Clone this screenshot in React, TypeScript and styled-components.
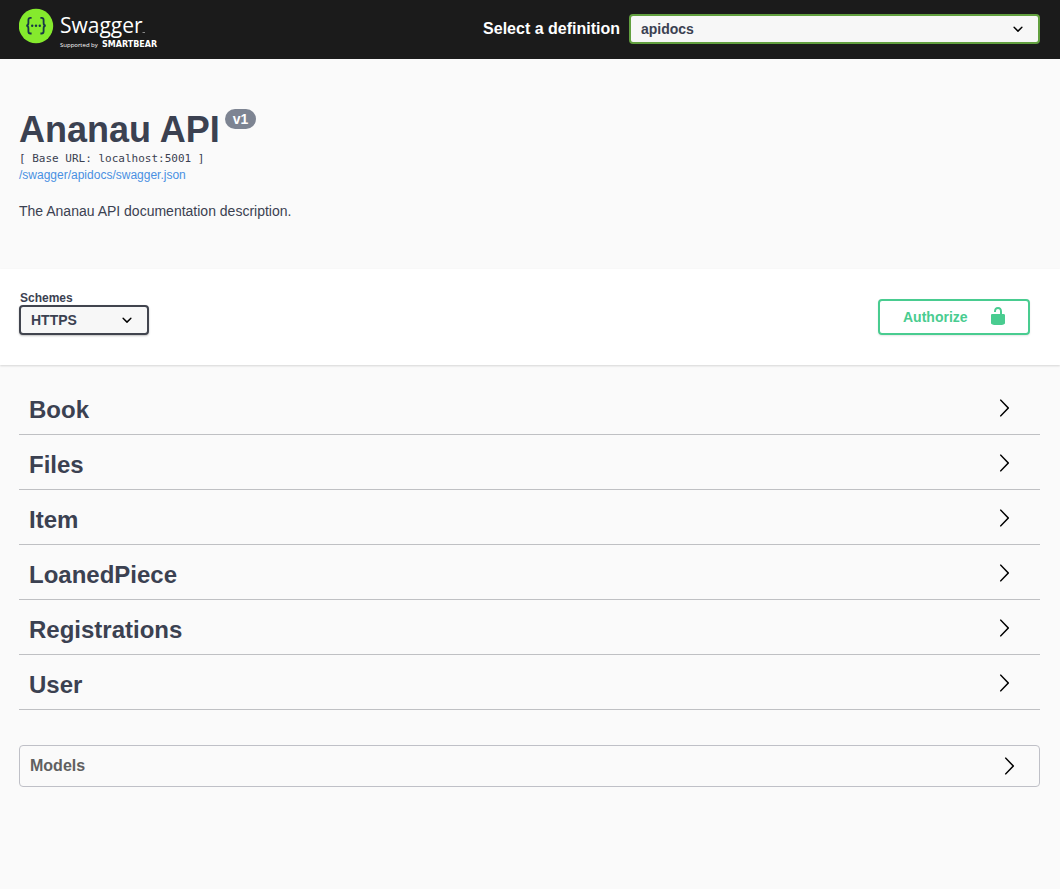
import React from "react";
import styled, { createGlobalStyle } from "styled-components";

const GlobalStyle = createGlobalStyle`
  *, *::before, *::after { box-sizing: border-box; }
  body {
    margin: 0;
    background: #fafafa;
    color: #3b4151;
    font-family: "Liberation Sans", Arial, sans-serif;
  }
`;

const TopBar = styled.header`
  display: grid;
  grid-template-columns: 5fr 6fr;
  align-items: center;
  height: 59px;
  padding: 0 20px 1px 19px;
  background: #1b1b1b;
`;

const LogoLink = styled.a`
  display: flex;
  width: max-content;
`;

const DefinitionForm = styled.form`
  display: flex;
  align-items: center;
  gap: 9px;
`;

const DefinitionLabel = styled.label`
  color: #ffffff;
  font-size: 16px;
  font-weight: 700;
  line-height: 18px;
  white-space: nowrap;
`;

const SelectBox = styled.div<{ $grow?: boolean }>`
  display: grid;
  align-items: center;
  flex: ${(p) => (p.$grow ? "1" : "none")};
  width: ${(p) => (p.$grow ? "auto" : "130px")};

  > * {
    grid-area: 1 / 1;
  }

  > svg {
    justify-self: end;
    margin-right: 12px;
    pointer-events: none;
  }
`;

const Select = styled.select<{ $accent: string; $raised?: boolean }>`
  appearance: none;
  width: 100%;
  height: 30px;
  padding: 0 40px 0 10px;
  border: 2px solid ${(p) => p.$accent};
  border-radius: 4px;
  background: #f7f7f7;
  box-shadow: ${(p) => (p.$raised ? "0 1px 2px rgba(0, 0, 0, 0.25)" : "none")};
  color: #3b4151;
  font: 700 14px "Liberation Sans", Arial, sans-serif;
`;

const Info = styled.section`
  padding: 50px 20px 48px 19px;
`;

const Title = styled.h1`
  display: flex;
  align-items: flex-start;
  gap: 5px;
  margin: 0;
  font-size: 36px;
  line-height: 41px;
`;

const Version = styled.small`
  padding: 0 8px;
  border-radius: 10px;
  background: #7d8492;
  color: #ffffff;
  font-size: 14px;
  line-height: 20px;
`;

const BaseUrl = styled.pre`
  margin: 0;
  padding-top: 1px;
  font: 11px/16px "DejaVu Sans Mono", monospace;
`;

const SpecLink = styled.a`
  display: block;
  width: max-content;
  color: #4990e2;
  font-size: 12px;
  line-height: 16px;
  text-decoration: none;
`;

const Description = styled.p`
  margin: 18px 0 0;
  font-size: 14px;
  line-height: 20px;
`;

const SchemeBar = styled.section`
  display: flex;
  align-items: flex-end;
  justify-content: space-between;
  padding: 22px 30px 30px 19px;
  background: #ffffff;
  box-shadow: 0 1px 2px rgba(0, 0, 0, 0.15);
`;

const SchemeLabel = styled.label`
  display: block;
  padding-left: 1px;
  font-size: 12px;
  font-weight: 700;
  line-height: 14px;
`;

const AuthorizeButton = styled.button`
  display: flex;
  align-items: center;
  justify-content: space-between;
  width: 152px;
  height: 36px;
  padding: 0 20px 0 23px;
  border: 2px solid #49cc90;
  border-radius: 4px;
  background: transparent;
  box-shadow: 0 1px 2px rgba(0, 0, 0, 0.1);
  color: #49cc90;
  font: 700 14px "Liberation Sans", Arial, sans-serif;

  > svg {
    margin-bottom: 2px;
  }
`;

const Content = styled.main`
  padding: 15px 20px 40px 19px;
`;

const TagHeading = styled.h2`
  margin: 0;
  border-bottom: 1px solid #bfc0c3;
`;

const TagButton = styled.button`
  display: flex;
  align-items: center;
  justify-content: space-between;
  width: 100%;
  height: 54px;
  padding: 2px 26px 0 10px;
  border: 0;
  background: transparent;
  color: #3b4151;
  font: 700 24px "Liberation Sans", Arial, sans-serif;
`;

const TagName = styled.span`
  padding-top: 4px;
  line-height: 28px;
`;

const Models = styled.section`
  margin-top: 35px;
  border: 1px solid #bfc0c7;
  border-radius: 4px;
`;

const ModelsHeading = styled.h3`
  margin: 0;
`;

const ModelsButton = styled.button`
  display: flex;
  align-items: center;
  justify-content: space-between;
  width: 100%;
  height: 40px;
  padding: 0 20px 0 10px;
  border: 0;
  background: transparent;
  color: #606060;
  font: 700 16px "Liberation Sans", Arial, sans-serif;
`;

const Logo = () => (
  <svg width="142" height="42" viewBox="0 0 142 42" role="img" aria-label="Swagger, supported by SmartBear">
    <circle cx="17" cy="18" r="17.2" fill="#85ea2d" />
    <g fill="none" stroke="#173647" strokeWidth="1.8">
      <path d="M12.6 9.9h-1.2q-2 0-2 2v3.1q0 2.7-2.2 2.7 2.2 0 2.2 2.7v3.1q0 2 2 2h1.2" />
      <path d="M21.4 9.9h1.2q2 0 2 2v3.1q0 2.7 2.2 2.7-2.2 0-2.2 2.7v3.1q0 2-2 2h-1.2" />
    </g>
    <g fill="#173647">
      <circle cx="13.2" cy="17.8" r="1.2" />
      <circle cx="17" cy="17.8" r="1.2" />
      <circle cx="20.8" cy="17.8" r="1.2" />
    </g>
    <g fill="#ffffff" fontFamily='"Open Sans", "Noto Sans", sans-serif'>
      <text x="41" y="25" fontSize="21">Swagger</text>
      <text x="41" y="39" fontSize="6">Supported by</text>
      <text x="83" y="39" fontSize="8" fontWeight="700" fontFamily='"DejaVu Sans", sans-serif'>SMARTBEAR</text>
      <path d="M123.5 24.5h2.5" stroke="#ffffff" strokeOpacity="0.6" strokeWidth="0.8" />
    </g>
  </svg>
);

const SmallArrow = () => (
  <svg width="20" height="20" viewBox="0 0 20 20" aria-hidden="true">
    <path d="M13.418 7.859a.695.695 0 01.978 0 .68.68 0 010 .969l-3.908 3.83a.697.697 0 01-.979 0l-3.908-3.83a.68.68 0 010-.969.695.695 0 01.978 0L10 11l3.418-3.141z" />
  </svg>
);

const LargeArrow = () => (
  <svg width="20" height="20" viewBox="0 0 20 20" fill="#000000" aria-hidden="true">
    <path d="M13.25 10L6.109 2.58c-.268-.27-.268-.707 0-.979.268-.27.701-.27.969 0l7.83 7.908c.268.271.268.709 0 .979l-7.83 7.908c-.268.271-.701.27-.969 0-.268-.269-.268-.707 0-.979L13.25 10z" />
  </svg>
);

const UnlockedIcon = () => (
  <svg width="20" height="20" viewBox="0 0 20 20" fill="#49cc90" aria-hidden="true">
    <path d="M15.8 8H14V5.6C14 2.703 12.665 1 10 1 7.334 1 6 2.703 6 5.6V6h2v-.801C8 3.754 8.797 3 10 3c1.203 0 2 .754 2 2.199V8H4c-.553 0-1 .646-1 1.199V17c0 .549.428 1.139.951 1.307l1.197.387C5.672 18.861 6.55 19 7.1 19h5.8c.549 0 1.428-.139 1.951-.307l1.196-.387c.524-.167.953-.757.953-1.306V9.199C17 8.646 16.352 8 15.8 8z" />
  </svg>
);

const tags = ["Book", "Files", "Item", "LoanedPiece", "Registrations", "User"];

export default function App() {
  return (
    <>
      <GlobalStyle />
      <TopBar>
        <LogoLink href="#">
          <Logo />
        </LogoLink>
        <DefinitionForm>
          <DefinitionLabel htmlFor="definition">Select a definition</DefinitionLabel>
          <SelectBox $grow>
            <Select id="definition" $accent="#62a03f">
              <option>apidocs</option>
            </Select>
            <SmallArrow />
          </SelectBox>
        </DefinitionForm>
      </TopBar>

      <Info>
        <Title>
          Ananau API
          <Version>v1</Version>
        </Title>
        <BaseUrl>[ Base URL: localhost:5001 ]</BaseUrl>
        <SpecLink href="#">/swagger/apidocs/swagger.json</SpecLink>
        <Description>The Ananau API documentation description.</Description>
      </Info>

      <SchemeBar>
        <div>
          <SchemeLabel htmlFor="schemes">Schemes</SchemeLabel>
          <SelectBox>
            <Select id="schemes" $accent="#41444e" $raised>
              <option>HTTPS</option>
            </Select>
            <SmallArrow />
          </SelectBox>
        </div>
        <AuthorizeButton type="button">
          Authorize
          <UnlockedIcon />
        </AuthorizeButton>
      </SchemeBar>

      <Content>
        {tags.map((tag) => (
          <TagHeading key={tag}>
            <TagButton type="button" aria-expanded={false}>
              <TagName>{tag}</TagName>
              <LargeArrow />
            </TagButton>
          </TagHeading>
        ))}
        <Models>
          <ModelsHeading>
            <ModelsButton type="button" aria-expanded={false}>
              Models
              <LargeArrow />
            </ModelsButton>
          </ModelsHeading>
        </Models>
      </Content>
    </>
  );
}
